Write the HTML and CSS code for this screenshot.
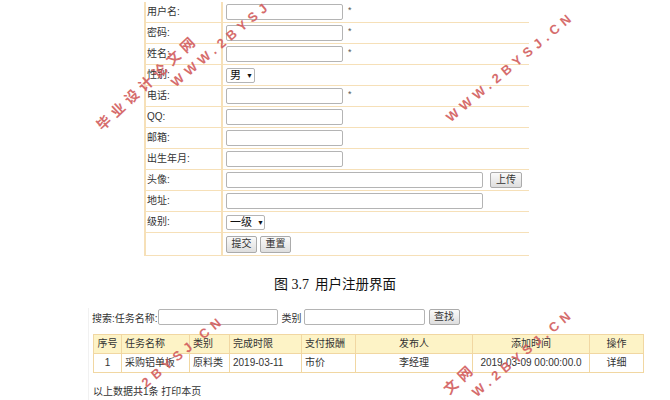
FILE: index.html
```html
<!DOCTYPE html>
<html lang="zh">
<head>
<meta charset="utf-8">
<title>用户注册界面</title>
<link rel="stylesheet" href="styles.css">
</head>
<body>
<div class="form">
  <div class="row"><div class="lbl">用户名:</div><div class="val"><input class="inp" type="text"><span class="req">*</span></div></div>
  <div class="row"><div class="lbl">密码:</div><div class="val"><input class="inp" type="text"><span class="req">*</span></div></div>
  <div class="row"><div class="lbl">姓名:</div><div class="val"><input class="inp" type="text"><span class="req">*</span></div></div>
  <div class="row"><div class="lbl">性别:</div><div class="val"><span class="sel sel-sex">男<span class="arr">▼</span></span></div></div>
  <div class="row"><div class="lbl">电话:</div><div class="val"><input class="inp" type="text"><span class="req">*</span></div></div>
  <div class="row"><div class="lbl">QQ:</div><div class="val"><input class="inp" type="text"></div></div>
  <div class="row"><div class="lbl">邮箱:</div><div class="val"><input class="inp" type="text"></div></div>
  <div class="row"><div class="lbl">出生年月:</div><div class="val"><input class="inp" type="text"></div></div>
  <div class="row"><div class="lbl">头像:</div><div class="val"><input class="inp wide" type="text"><button class="btn btn-up">上传</button></div></div>
  <div class="row"><div class="lbl">地址:</div><div class="val"><input class="inp wide" type="text"></div></div>
  <div class="row"><div class="lbl">级别:</div><div class="val"><span class="sel sel-lv">一级<span class="arr">▼</span></span></div></div>
  <div class="row last"><div class="lbl"></div><div class="val"><button class="btn">提交</button><button class="btn btn-gap">重置</button></div></div>
</div>

<div class="caption"><span class="fig">图 3.7</span>&nbsp;&nbsp;用户注册界面</div>

<div class="list">
  <div class="search">
    <span>搜索:任务名称:</span><input class="inp s1" type="text"><span class="cat">类别</span><input class="inp s2" type="text"><button class="btn btn-find">查找</button>
  </div>
  <table class="grid">
    <colgroup>
      <col style="width:28px"><col style="width:68px"><col style="width:40px"><col style="width:72px"><col style="width:54px"><col style="width:117px"><col style="width:117px"><col style="width:54px">
    </colgroup>
    <thead>
      <tr><th class="c">序号</th><th>任务名称</th><th>类别</th><th>完成时限</th><th>支付报酬</th><th class="c">发布人</th><th class="c">添加时间</th><th class="c">操作</th></tr>
    </thead>
    <tbody>
      <tr><td class="c">1</td><td>采购铝单板</td><td>原料类</td><td>2019-03-11</td><td>市价</td><td class="c">李经理</td><td class="c">2019-03-09 00:00:00.0</td><td class="c">详细</td></tr>
    </tbody>
  </table>
  <div class="foot">以上数据共1条 打印本页</div>
</div>

<span class="wm wm-cn wm1c">毕业设计论文网</span>
<span class="wm wm1w">WWW.2BYSJ</span>
<span class="wm wm2w">WWW.2BYSJ.CN</span>
<span class="wm wm3w">.2BYSJ.CN</span>
<span class="wm wm4w">W.2BYSJ.CN</span>
<span class="wm wm-cn wm4c">文网</span>
</body>
</html>
```

FILE: styles.css
```css
html {
  margin: 0;
  padding: 0;
  overflow: hidden;
}
body {
  margin: 0;
  padding: 0;
  background: #fff;
  position: relative;
  width: 670px;
  height: 400px;
  overflow: hidden;
  font-family: "Liberation Sans", "Noto Sans CJK SC", sans-serif;
  font-size: 10px;
  color: #333;
}

/* registration form */
.form {
  margin: 2px 0 0 144px;
  width: 385px;
  box-sizing: border-box;
  border-left: 2px solid #f6e0b8;
}
.row {
  display: grid;
  grid-template-columns: 77px 1fr;
  height: 21px;
  box-sizing: border-box;
  border-bottom: 1px solid #f6e0b8;
}
.row.last {
  height: 23px;
}
.lbl {
  border-right: 2px solid #f6e0b8;
  padding-left: 1px;
  display: flex;
  align-items: center;
  line-height: 1;
}
.val {
  padding-left: 3px;
  display: flex;
  align-items: center;
}
.inp {
  box-sizing: border-box;
  width: 117px;
  height: 16px;
  margin: 0;
  padding: 0 2px;
  border: 1px solid #b4b4b4;
  border-radius: 2px;
  background: #fff;
  font-size: 10px;
}
.inp.wide {
  width: 257px;
}
.req {
  margin-left: 5px;
  font-size: 9px;
  color: #555;
  position: relative;
  top: -2px;
}
.sel {
  box-sizing: border-box;
  display: inline-flex;
  align-items: center;
  height: 15px;
  border: 1px solid #b4b4b4;
  border-radius: 2px;
  padding: 0 0 0 3px;
  font-size: 11px;
  color: #111;
  line-height: 1;
}
.sel-sex { width: 29px; }
.sel-lv { width: 39px; }
.arr {
  font-size: 7px;
  margin-left: 5px;
  color: #111;
}
.btn {
  box-sizing: border-box;
  height: 17px;
  width: 31px;
  margin: 0;
  padding: 0;
  border: 1px solid #ababab;
  border-radius: 2px;
  background: linear-gradient(#fafafa, #dedede);
  font-family: "Liberation Sans", "Noto Sans CJK SC", sans-serif;
  font-size: 10px;
  color: #333;
  line-height: 1;
}
.btn-up {
  margin-left: 7px;
  width: 32px;
  height: 16px;
}
.btn-gap {
  margin-left: 3px;
}

/* caption */
.caption {
  margin-top: 17px;
  text-align: center;
  font-family: "Noto Sans CJK SC", sans-serif;
  font-size: 13.5px;
  line-height: 20px;
  color: #111;
}
.fig {
  font-family: "Liberation Serif", "Noto Sans CJK SC", serif;
  font-size: 14px;
}

/* list section */
.list {
  margin: 13px 0 0 88px;
  padding-left: 3px;
  border-left: 1px solid #f1f1f1;
}
.search {
  display: flex;
  align-items: center;
  height: 18px;
  padding-left: 0;
}
.search .s1 {
  width: 120px;
  margin-left: 0;
}
.cat {
  margin-left: 4px;
}
.search .s2 {
  width: 121px;
  margin-left: 2px;
}
.btn-find {
  margin-left: 4px;
  width: 31px;
  height: 16px;
}
.grid {
  margin: 8px 0 0 1px;
  width: 550px;
  border-collapse: collapse;
  table-layout: fixed;
}
.grid th, .grid td {
  border: 1px solid #f1d7a2;
  height: 18px;
  padding: 0 3px;
  font-weight: normal;
  text-align: left;
  white-space: nowrap;
  line-height: 1;
}
.grid th {
  background: #fdf3c6;
}
.grid .c {
  text-align: center;
}
.foot {
  margin-top: 10px;
  padding-left: 1px;
  line-height: 18px;
}

/* watermarks */
.wm {
  position: absolute;
  transform-origin: 0 100%;
  transform: rotate(-40deg);
  font-family: "Liberation Sans", sans-serif;
  font-weight: bold;
  font-size: 13px;
  letter-spacing: 5px;
  line-height: 13px;
  color: #d25d5d;
  white-space: nowrap;
  opacity: 0.9;
}
.wm-cn {
  font-family: "Noto Sans CJK SC", sans-serif;
  font-size: 14px;
  line-height: 14px;
  letter-spacing: 5px;
  transform: rotate(-43deg);
}
.wm1c { left: 103px; top: 118px; }
.wm1w { left: 177px; top: 76px; }
.wm2w { left: 452px; top: 111px; }
.wm3w { left: 141px; top: 382px; }
.wm4w { left: 478px; top: 386px; }
.wm4c { left: 450px; top: 382px; }
```
